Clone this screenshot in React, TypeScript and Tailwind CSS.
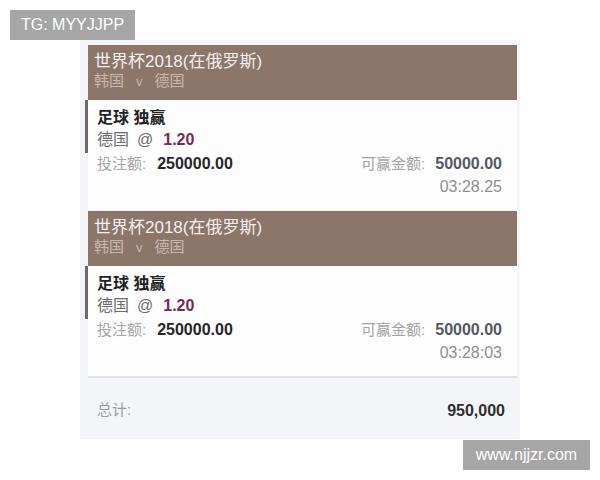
const FONT = { fontFamily: '"Liberation Sans", "Noto Sans CJK SC", sans-serif' };

type Bet = {
  league: string;
  home: string;
  away: string;
  market: string;
  pick: string;
  odds: string;
  stake: string;
  win: string;
  time: string;
};

const bets: Bet[] = [
  {
    league: "世界杯2018(在俄罗斯)",
    home: "韩国",
    away: "德国",
    market: "足球 独赢",
    pick: "德国",
    odds: "1.20",
    stake: "250000.00",
    win: "50000.00",
    time: "03:28.25",
  },
  {
    league: "世界杯2018(在俄罗斯)",
    home: "韩国",
    away: "德国",
    market: "足球 独赢",
    pick: "德国",
    odds: "1.20",
    stake: "250000.00",
    win: "50000.00",
    time: "03:28:03",
  },
];

function BetCard({ bet }: { bet: Bet }) {
  return (
    <div>
      {/* Header: liga + partido */}
      <div className="h-[55px] bg-[#8c766a] pl-[6px] pt-[8px]">
        <p className="text-[17px] leading-[18px] text-[#f4eeea]">{bet.league}</p>
        <p className="text-[15px] leading-[20px] text-[#c9b7ad]">
          {bet.home}
          <span className="mx-[12px] text-[13px]">v</span>
          {bet.away}
        </p>
      </div>

      {/* Body */}
      <div className="h-[110px] bg-[#fdfdfe] pl-[9px] pr-[15px]">
        <div className="-ml-[12px] border-l-[3px] border-[#6f6a68] pb-[2px] pl-[9px] pt-[7px] text-[16px] leading-[22px]">
          <p className="font-bold text-[#222]">{bet.market}</p>
          <p className="text-[#6b6b6b]">
            {bet.pick}
            <span className="ml-[8px]">@</span>
            <span className="ml-[10px] font-bold text-[#76295a]">{bet.odds}</span>
          </p>
        </div>
        <div className="flex items-baseline justify-between text-[15px] leading-[22px]">
          <p>
            <span className="text-[#a6a6a6]">投注额:</span>
            <span className="ml-[11px] text-[16px] font-bold text-[#262626]">{bet.stake}</span>
          </p>
          <p>
            <span className="text-[#a3a3a3]">可赢金额:</span>
            <span className="ml-[10px] text-[16px] font-bold text-[#525963]">{bet.win}</span>
          </p>
        </div>
        <p className="text-right text-[16px] leading-[23px] text-[#8e8e8e]">{bet.time}</p>
      </div>
    </div>
  );
}

export default function App() {
  return (
    <div className="relative h-[480px] w-[600px] bg-white pt-[40px]" style={FONT}>
      <div className="mx-auto w-[440px] bg-[#f4f5f9] pl-[8px] pr-[3px] pt-[5px]">
        <div className="flex flex-col gap-px">
          {bets.map((b, i) => (
            <BetCard key={i} bet={b} />
          ))}
        </div>
        <div className="h-[2px] bg-[#e1e3e9]" />
        <div className="flex h-[61px] items-center justify-between pl-[9px] pr-[12px] pt-[4px]">
          <span className="text-[15px] text-[#9c9c9c]">总计:</span>
          <span className="text-[16px] font-bold text-[#2e2e2e]">950,000</span>
        </div>
      </div>

      {/* Marcas de agua */}
      <div className="absolute left-[10px] top-[10px] flex h-[30px] w-[125px] items-center justify-center bg-[#a6a6a6] text-[16px] text-white">
        TG: MYYJJPP
      </div>
      <div className="absolute left-[463px] top-[440px] flex h-[30px] w-[127px] items-center justify-center bg-[#a6a6a6] text-[16px] text-white">
        www.njjzr.com
      </div>
    </div>
  );
}
